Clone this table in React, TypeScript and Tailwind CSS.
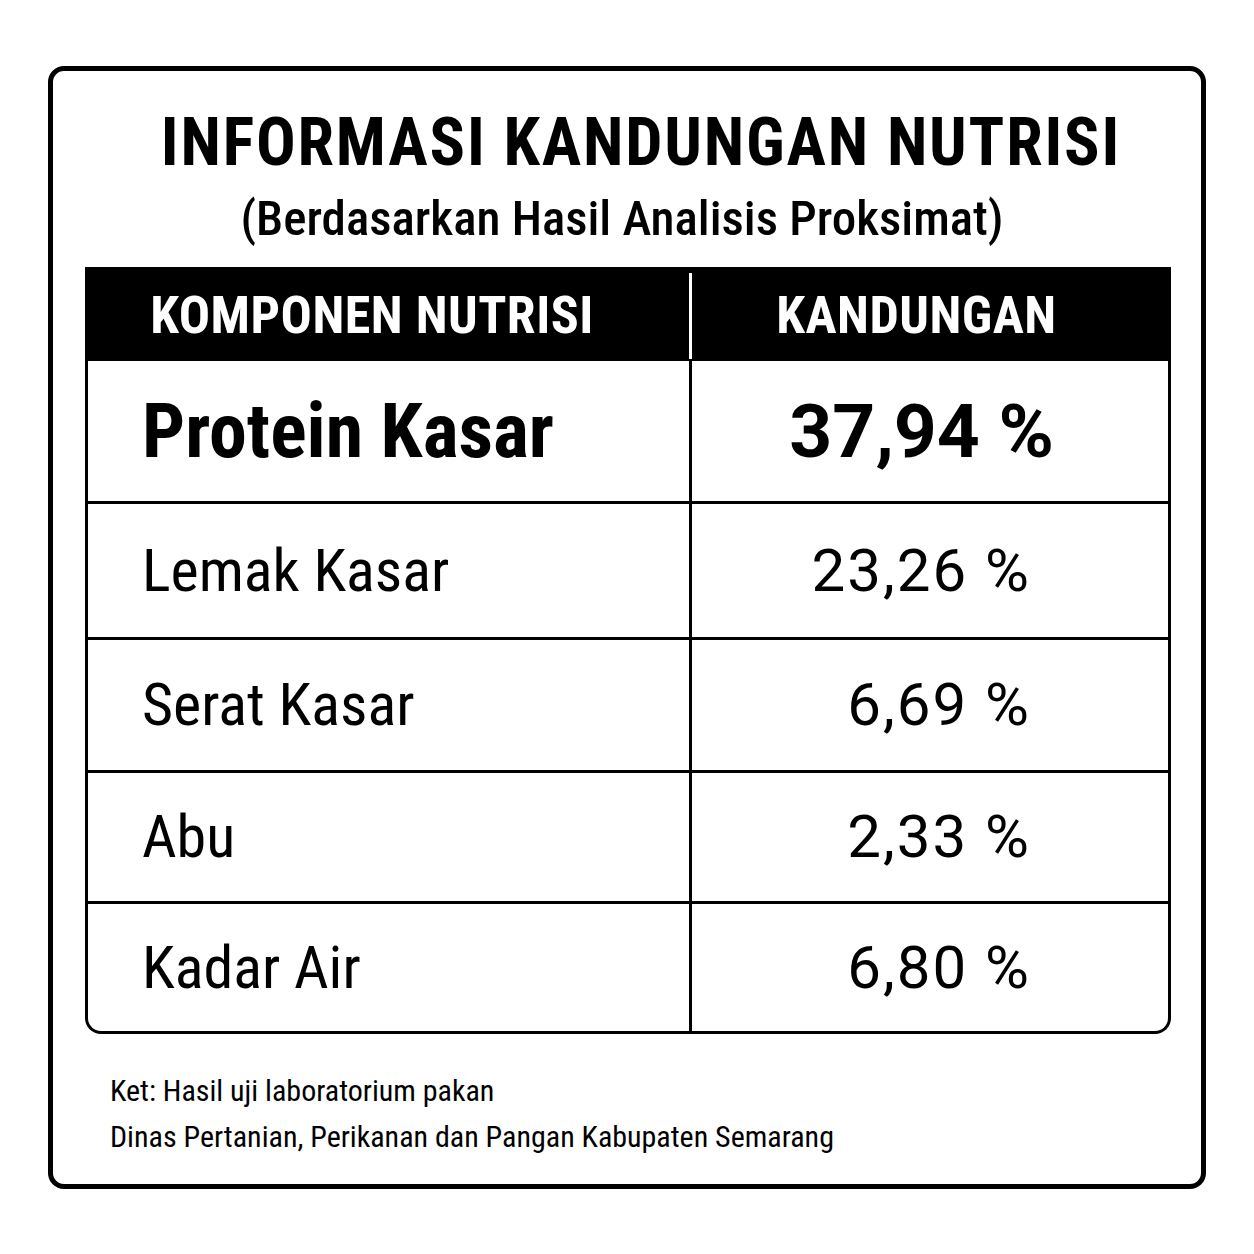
const rows = [
  { name: "Protein Kasar", value: "37,94 %", bold: true, h: "h-[143px]" },
  { name: "Lemak Kasar", value: "23,26 %", bold: false, h: "h-[136px]" },
  { name: "Serat Kasar", value: "6,69 %", bold: false, h: "h-[133px]" },
  { name: "Abu", value: "2,33 %", bold: false, h: "h-[131px]" },
  { name: "Kadar Air", value: "6,80 %", bold: false, h: "h-[127px]" },
];

export default function App() {
  return (
    <div className="w-[1254px] h-[1254px] bg-white pt-[66px] pl-[48px] text-black font-['Roboto',sans-serif] font-stretch-condensed">
      <div className="w-[1158px] h-[1123px] border-[5px] border-black rounded-[16px] flex flex-col">
        <div className="pt-[34px] flex flex-col items-center">
          <h1 className="text-[66px] leading-[76px] font-bold tracking-[1.8px] pl-[28px]">INFORMASI KANDUNGAN NUTRISI</h1>
          <p className="text-[49px] leading-[56px] font-medium mt-[10px] -ml-[10px]">(Berdasarkan Hasil Analisis Proksimat)</p>
        </div>

        <div className="ml-[32px] mt-[20px] w-[1086px]">
          <div className="h-[94px] bg-black text-white flex">
            <div className="w-[604px] flex items-center justify-center pr-[30px] pt-[4px]">
              <span className="text-[52px] font-bold tracking-[0.5px]">KOMPONEN NUTRISI</span>
            </div>
            <div className="w-[3px] mt-[6px] mb-[2px] bg-white" />
            <div className="flex-1 flex items-center justify-center pr-[30px] pt-[4px]">
              <span className="text-[52px] font-bold tracking-[0.5px]">KANDUNGAN</span>
            </div>
          </div>
          <div className="border-[3px] border-t-0 border-black rounded-b-[16px] overflow-hidden">
            {rows.map((r, i) => (
              <div
                key={r.name}
                className={`${r.h} flex ${i < rows.length - 1 ? "border-b-[3px] border-black" : ""}`}
              >
                <div className="w-[604px] border-r-[3px] border-black flex items-center pl-[54px]">
                  <span className={r.bold ? "text-[76px] font-bold" : "text-[60px]"}>{r.name}</span>
                </div>
                <div className="flex-1 flex items-center justify-end">
                  <span
                    className={
                      r.bold
                        ? "text-[75px] font-bold font-stretch-normal pr-[114px]"
                        : "text-[60px] font-stretch-normal tracking-[2px] pr-[137px]"
                    }
                  >
                    {r.value}
                  </span>
                </div>
              </div>
            ))}
          </div>
        </div>

        <div className="ml-[57px] mt-[34px] text-[30px] leading-[46px]">
          <p>Ket: Hasil uji laboratorium pakan</p>
          <p>Dinas Pertanian, Perikanan dan Pangan Kabupaten Semarang</p>
        </div>
      </div>
    </div>
  );
}
